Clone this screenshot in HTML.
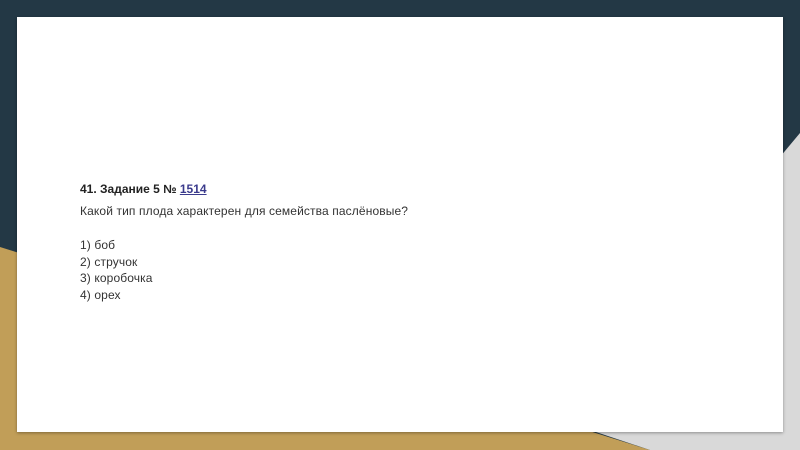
<!DOCTYPE html>
<html><head><meta charset="utf-8"><style>
html,body{margin:0;padding:0}
body{width:800px;height:450px;position:relative;overflow:hidden;background:#233845;font-family:"Liberation Sans",sans-serif}
svg.bg{position:absolute;left:0;top:0}
.card{position:absolute;left:17px;top:17px;width:766px;height:415px;background:#fff;box-shadow:0 1px 3px rgba(0,0,0,.35)}
.t{position:absolute;left:80px;font-size:12px;color:#333;white-space:nowrap;letter-spacing:0.12px;line-height:14px}
.b{font-weight:bold;color:#222;letter-spacing:0px}
a{color:#3a3a8c;text-decoration:underline}
</style></head><body>
<svg class="bg" width="800" height="450">
<polygon points="0,247 650,450 0,450" fill="#c19e58"/>
<polygon points="800,133 800,450 650,450 560,420" fill="#d9d9d9"/>
</svg>
<div class="card"></div>
<div class="t b" style="top:182px">41. Задание 5 № <a>1514</a></div>
<div class="t" style="top:204px">Какой тип плода характерен для семейства паслёновые?</div>
<div class="t" style="top:238px">1) боб</div>
<div class="t" style="top:255px">2) стручок</div>
<div class="t" style="top:271px">3) коробочка</div>
<div class="t" style="top:288px">4) орех</div>
</body></html>
